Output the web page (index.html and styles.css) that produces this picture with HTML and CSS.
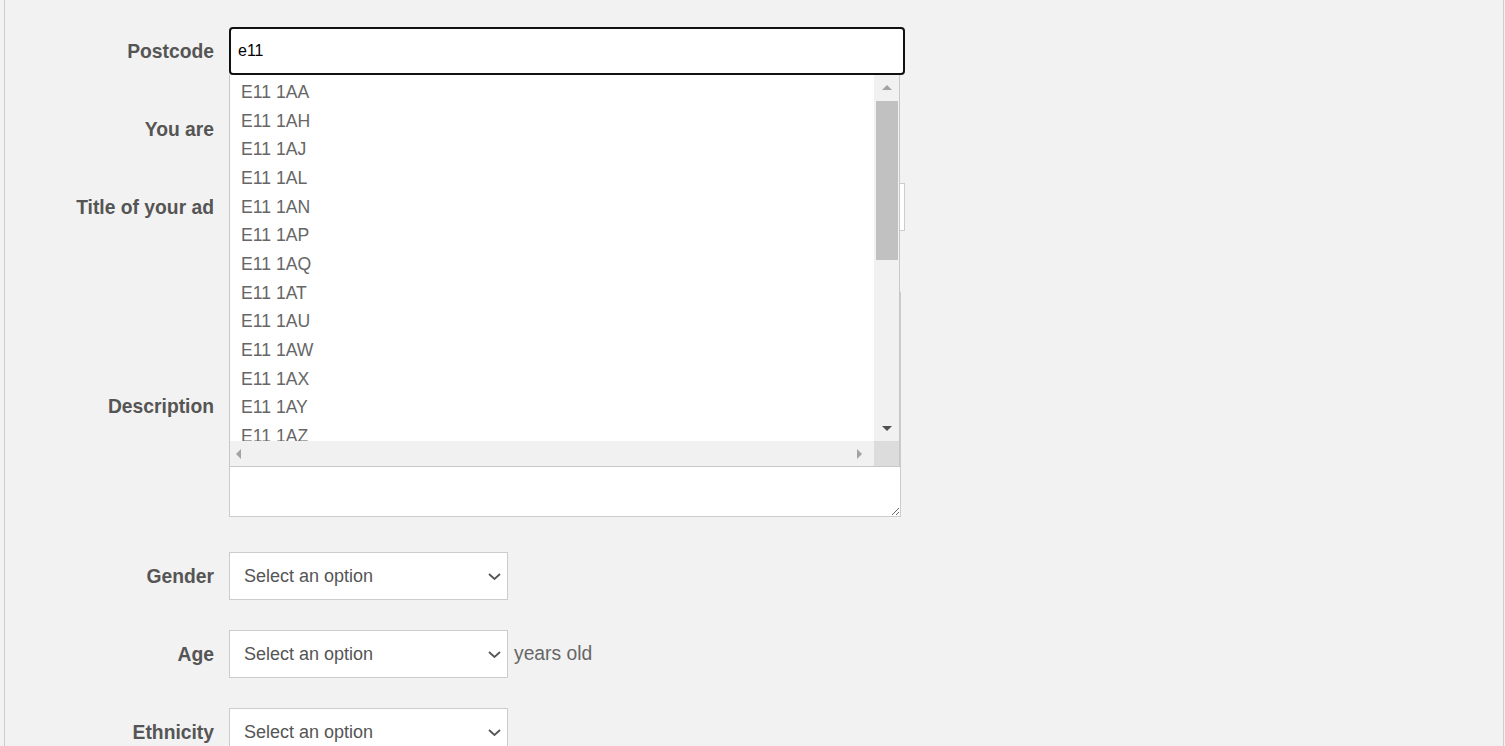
FILE: index.html
```html
<!DOCTYPE html>
<html lang="en">
<head>
<meta charset="utf-8">
<title>Post an ad</title>
<link rel="stylesheet" href="styles.css">
</head>
<body>
<div class="page">
  <form class="form">
    <div class="row">
      <label class="label" for="postcode">Postcode</label>
      <div class="field-postcode">
        <input class="input input-focus" id="postcode" type="text" value="e11">
        <div class="suggest">
          <ul class="suggest-list">
            <li>E11 1AA</li>
            <li>E11 1AH</li>
            <li>E11 1AJ</li>
            <li>E11 1AL</li>
            <li>E11 1AN</li>
            <li>E11 1AP</li>
            <li>E11 1AQ</li>
            <li>E11 1AT</li>
            <li>E11 1AU</li>
            <li>E11 1AW</li>
            <li>E11 1AX</li>
            <li>E11 1AY</li>
            <li>E11 1AZ</li>
          </ul>
          <div class="vbar">
            <div class="sb-btn">
              <svg width="10" height="5" viewBox="0 0 10 5"><polygon points="0,5 10,5 5,0" fill="#a3a3a3"/></svg>
            </div>
            <div class="vtrack"><div class="vthumb"></div></div>
            <div class="sb-btn">
              <svg width="10" height="5" viewBox="0 0 10 5"><polygon points="0,0 10,0 5,5" fill="#505050"/></svg>
            </div>
          </div>
          <div class="hbar">
            <svg width="5" height="10" viewBox="0 0 5 10"><polygon points="5,0 5,10 0,5" fill="#a3a3a3"/></svg>
            <svg width="5" height="10" viewBox="0 0 5 10"><polygon points="0,0 0,10 5,5" fill="#a3a3a3"/></svg>
          </div>
          <div class="corner"></div>
        </div>
      </div>
    </div>

    <div class="row">
      <span class="label">You are</span>
      <div class="select select-hidden"></div>
    </div>

    <div class="row">
      <label class="label" for="title">Title of your ad</label>
      <input class="input input-plain" id="title" type="text">
    </div>

    <div class="row row-desc">
      <label class="label label-desc" for="desc">Description</label>
      <textarea class="textarea" id="desc"></textarea>
    </div>

    <div class="row row-gender">
      <span class="label">Gender</span>
      <div class="select">
        <span>Select an option</span>
        <svg class="chev" width="13" height="7" viewBox="0 0 13 7"><polyline points="1,1 6.5,6 12,1" fill="none" stroke="#555" stroke-width="1.8"/></svg>
      </div>
    </div>

    <div class="row">
      <span class="label">Age</span>
      <div class="control">
        <div class="select">
          <span>Select an option</span>
          <svg class="chev" width="13" height="7" viewBox="0 0 13 7"><polyline points="1,1 6.5,6 12,1" fill="none" stroke="#555" stroke-width="1.8"/></svg>
        </div>
        <span class="suffix">years old</span>
      </div>
    </div>

    <div class="row">
      <span class="label">Ethnicity</span>
      <div class="select">
        <span>Select an option</span>
        <svg class="chev" width="13" height="7" viewBox="0 0 13 7"><polyline points="1,1 6.5,6 12,1" fill="none" stroke="#555" stroke-width="1.8"/></svg>
      </div>
    </div>
  </form>
</div>
</body>
</html>
```

FILE: styles.css
```css
* {
  box-sizing: border-box;
}

html,
body {
  margin: 0;
  background: #f2f2f2;
}

body {
  font-family: "Liberation Sans", Arial, sans-serif;
  overflow: hidden;
}

.page {
  margin-left: 4px;
  width: 1500px;
  height: 746px;
  border-left: 1px solid #cccccc;
  border-right: 1px solid #cccccc;
  padding-top: 27px;
  overflow: hidden;
}

.form {
  display: flex;
  flex-direction: column;
  gap: 30px;
  margin: 0;
}

.row {
  display: flex;
  align-items: center;
  gap: 15px;
}

.label {
  flex: none;
  width: 209px;
  text-align: right;
  font-weight: bold;
  font-size: 19.3px;
  line-height: 24px;
  padding-top: 1px;
  color: #555555;
}

.label-desc {
  padding-top: 4px;
}

.field-postcode {
  position: relative;
  width: 676px;
  height: 48px;
}

.input {
  display: block;
  width: 676px;
  height: 48px;
  background: #ffffff;
  font-family: "Liberation Sans", Arial, sans-serif;
  outline: none;
  margin: 0;
}

.input-focus {
  border: 2px solid #111111;
  border-radius: 4px;
  padding: 0 7px;
  font-size: 16px;
  color: #000000;
}

.input-plain {
  border: 1px solid #cccccc;
  padding: 0 14px;
  font-size: 18px;
}

.suggest {
  position: absolute;
  top: 48px;
  left: 0;
  z-index: 10;
  width: 671px;
  height: 392px;
  background: #ffffff;
  border: 1px solid #c8c8c8;
  border-top: none;
  display: grid;
  grid-template-columns: 1fr 25px;
  grid-template-rows: 366px 25px;
}

.suggest-list {
  margin: 0;
  padding: 3px 0 0 11px;
  list-style: none;
  overflow: hidden;
  font-size: 17.6px;
  line-height: 28.67px;
  color: #666666;
}

.vbar {
  background: #f1f1f1;
  display: flex;
  flex-direction: column;
}

.sb-btn {
  flex: none;
  height: 25px;
  display: flex;
  align-items: center;
  justify-content: center;
  padding-left: 1px;
}

.vtrack {
  flex: 1;
  padding: 1px 1px 0 2px;
}

.vthumb {
  height: 159px;
  background: #c1c1c1;
}

.hbar {
  background: #f1f1f1;
  display: flex;
  align-items: center;
  justify-content: space-between;
  padding: 0 12px 0 6px;
}

.corner {
  background: #dcdcdc;
}

.row-desc {
  margin-top: 31px;
}

.textarea {
  display: block;
  width: 672px;
  height: 225px;
  margin: 0;
  border: 1px solid #cccccc;
  background: #ffffff;
  resize: both;
  font-family: "Liberation Sans", Arial, sans-serif;
  font-size: 18px;
}

.row-gender {
  margin-top: 5px;
}

.control {
  display: flex;
  align-items: center;
  gap: 6px;
}

.select {
  flex: none;
  width: 279px;
  height: 48px;
  background: #ffffff;
  border: 1px solid #cccccc;
  display: flex;
  align-items: center;
  justify-content: space-between;
  padding: 0 6px 0 14px;
  font-size: 18px;
  color: #555555;
}

.chev {
  display: block;
}

.suffix {
  font-size: 19.3px;
  color: #666666;
}
```
